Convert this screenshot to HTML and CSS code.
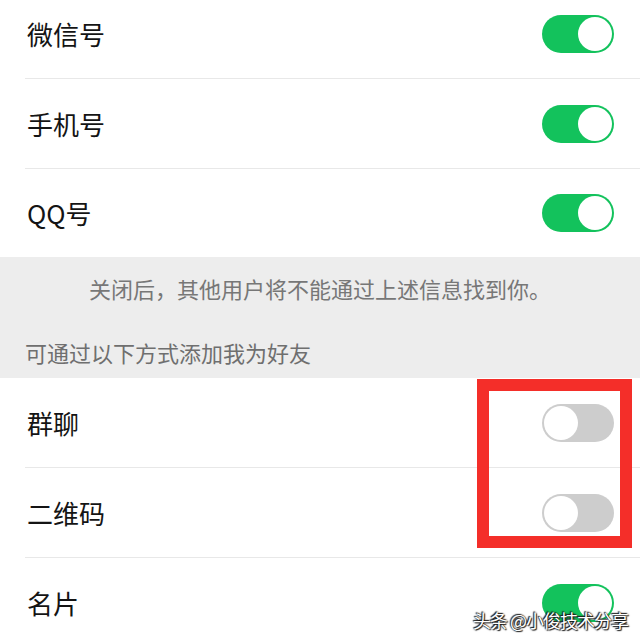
FILE: index.html
```html
<!DOCTYPE html>
<html lang="zh-CN">
<head>
  <meta charset="UTF-8" />
  <meta name="viewport" content="width=device-width, initial-scale=1.0"/>
  <title>添加我的方式</title>
  <link rel="stylesheet" href="styles.css">
</head>
<body>
  <div class="group group-top">
    <div class="row">
      <span class="label">微信号</span>
      <span class="switch on"></span>
    </div>
    <div class="row">
      <span class="label">手机号</span>
      <span class="switch on"></span>
    </div>
    <div class="row">
      <span class="label">QQ号</span>
      <span class="switch on"></span>
    </div>
  </div>

  <div class="note">关闭后，其他用户将不能通过上述信息找到你。</div>
  <div class="section-title">可通过以下方式添加我为好友</div>

  <div class="group group-add">
    <div class="row">
      <span class="label">群聊</span>
      <span class="switch off"></span>
    </div>
    <div class="row">
      <span class="label">二维码</span>
      <span class="switch off"></span>
    </div>
    <div class="row">
      <span class="label">名片</span>
      <span class="switch on"></span>
    </div>
    <!-- 标注框 -->
    <div class="mark"></div>
  </div>

  <div class="watermark">头条 @小俊技术分享</div>
</body>
</html>
```

FILE: styles.css
```css
html, body {
  margin: 0;
  padding: 0;
}
body {
  width: 640px;
  height: 640px;
  overflow: hidden;
  position: relative;
  background-color: #ededed;
  font-family: "Noto Sans CJK SC", "Noto Sans", sans-serif;
}
.group {
  background-color: #fff;
  position: relative;
}
.group-top {
  margin-top: -11px;
}
.row {
  display: flex;
  align-items: center;
  justify-content: space-between;
  height: 90px;
  box-sizing: border-box;
  padding: 0 26px 0 27px;
  position: relative;
}
/* 分割线从左边距开始 */
.row::after {
  content: "";
  position: absolute;
  left: 25px;
  right: 0;
  bottom: 0;
  height: 1px;
  background-color: #e8e8e8;
}
.row:last-child::after,
.group-add .row:nth-child(3)::after {
  display: none;
}
.group-top .row:last-child {
  height: 88px;
}
.label {
  font-size: 26px;
  color: #141414;
  line-height: 1;
}
.switch {
  width: 72px;
  height: 38px;
  border-radius: 19px;
  position: relative;
  box-sizing: border-box;
}
.switch::after {
  content: "";
  position: absolute;
  top: 2px;
  width: 34px;
  height: 34px;
  border-radius: 50%;
  background-color: #fff;
  box-sizing: border-box;
}
.switch.on {
  background-color: #13c25c;
}
.switch.on::after {
  right: 2px;
}
.switch.off {
  background-color: #cdcdcd;
}
.switch.off::after {
  left: 2px;
}
.note {
  padding-top: 17px;
  line-height: 28px;
  font-size: 22px;
  color: #777;
  text-align: center;
}
.section-title {
  padding: 36px 25px 12px;
  line-height: 28px;
  font-size: 22px;
  color: #6f6f6f;
}
.mark {
  position: absolute;
  top: 1px;
  right: 8px;
  width: 155px;
  height: 169px;
  box-sizing: border-box;
  border: 12px solid #f42e29;
}
.watermark {
  position: absolute;
  right: 12px;
  bottom: 9px;
  font-size: 18px;
  letter-spacing: -1px;
  line-height: 22px;
  color: #fff;
  text-shadow: 0 0 2px #000, 1px 1px 1px #222, -1px -1px 1px #222;
}
```
